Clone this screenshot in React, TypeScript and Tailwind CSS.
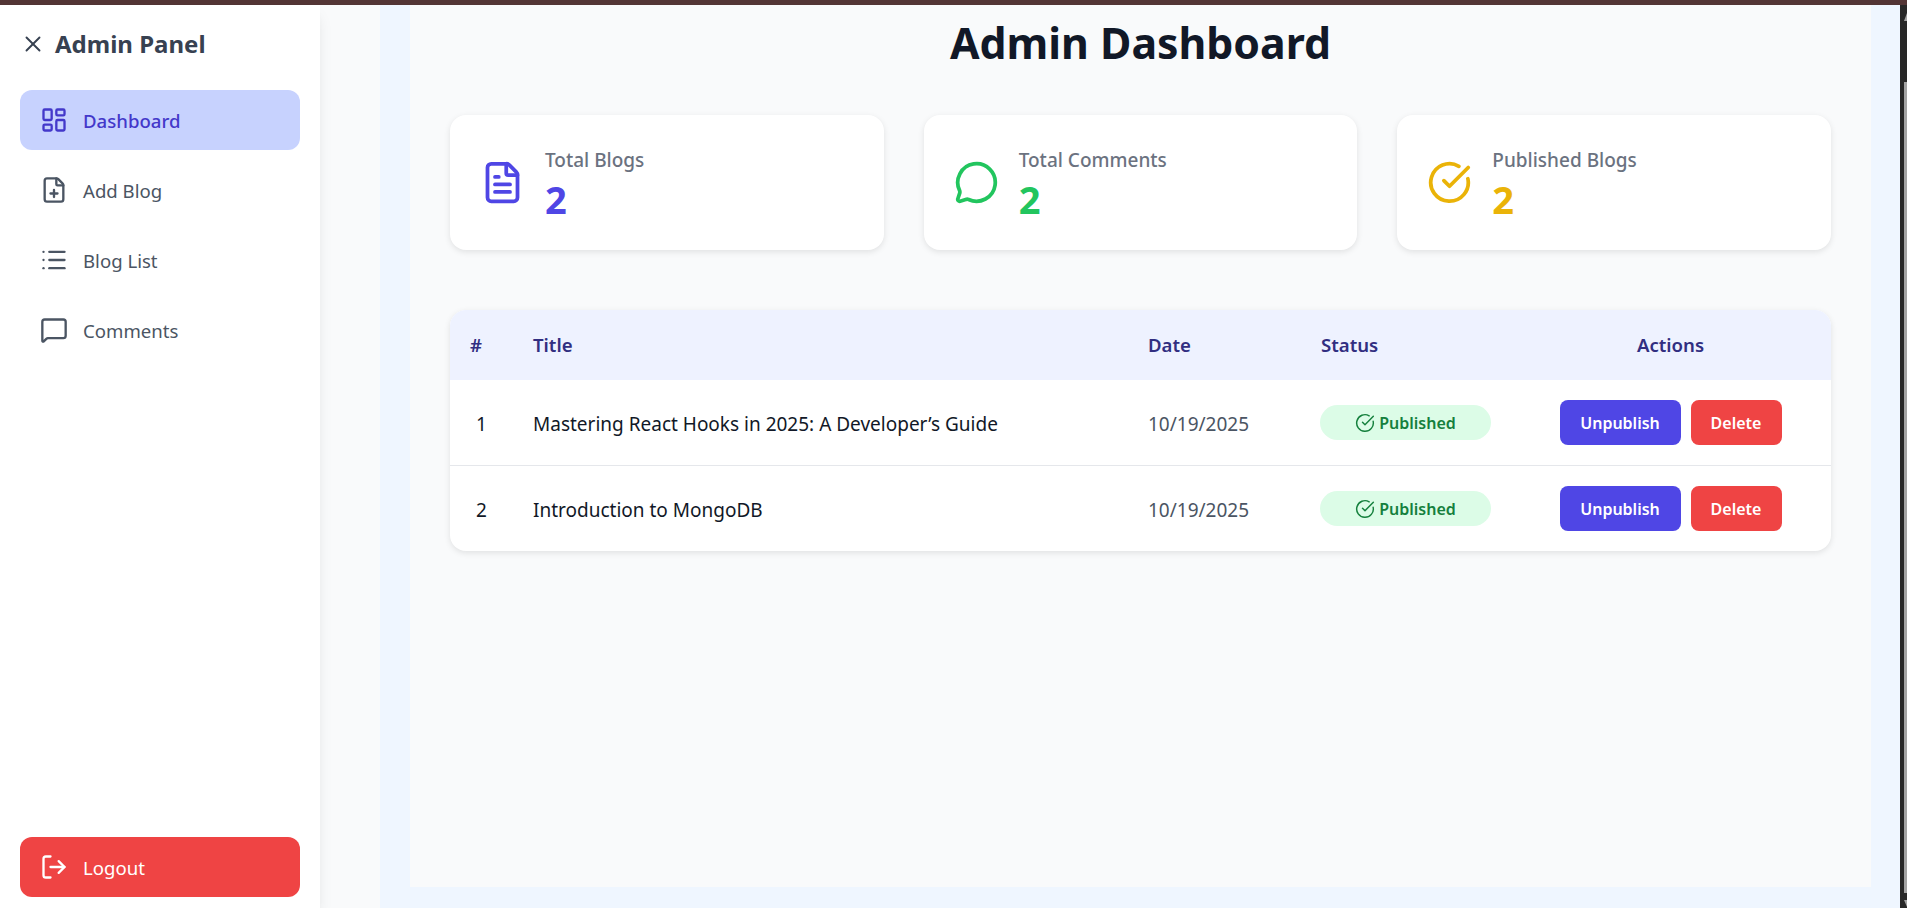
import React from 'react';
import {
  X,
  LayoutDashboard,
  FilePlus,
  List,
  MessageSquare,
  LogOut,
  FileText,
  MessageCircle,
  CircleCheckBig,
} from 'lucide-react';

const navItems = [
  { label: 'Dashboard', icon: LayoutDashboard, active: true },
  { label: 'Add Blog', icon: FilePlus, active: false },
  { label: 'Blog List', icon: List, active: false },
  { label: 'Comments', icon: MessageSquare, active: false },
];

const stats = [
  { label: 'Total Blogs', icon: FileText, iconClass: 'text-[#4f46e5]' },
  { label: 'Total Comments', icon: MessageCircle, iconClass: 'text-[#22c55e]' },
  { label: 'Published Blogs', icon: CircleCheckBig, iconClass: 'text-[#eab308]' },
];

const blogs = [
  { id: 1, title: 'Mastering React Hooks in 2025: A Developer’s Guide', date: '10/19/2025' },
  { id: 2, title: 'Introduction to MongoDB', date: '10/19/2025' },
];

const App: React.FC = () => {
  return (
    <div className="flex h-screen flex-col overflow-hidden bg-[#272727] font-['Noto_Sans',sans-serif]">
      <div className="h-[5px] shrink-0 bg-[#533535]" />
      <div className="flex min-h-0 flex-1">
        <div className="flex min-w-0 flex-1">
          <aside className="z-10 flex w-[320px] shrink-0 flex-col bg-white px-5 pb-[11px] shadow-lg">
            <div className="mb-[7px] flex h-[78px] shrink-0 items-center gap-[9px]">
              <X className="h-[26px] w-[26px] text-[#374151]" strokeWidth={1.75} />
              <h2 className="text-[24px] leading-none font-bold text-[#374151]">Admin Panel</h2>
            </div>
            <nav className="flex flex-col gap-[10px]">
              {navItems.map((item) => (
                <a
                  key={item.label}
                  className={`flex h-[60px] items-center gap-[15px] rounded-xl px-5 text-[18.6px] ${
                    item.active ? 'bg-[#c7d2fe] font-medium text-[#4338ca]' : 'text-[#4b5563]'
                  }`}
                >
                  <item.icon className="h-7 w-7" strokeWidth={2} />
                  <span className="pt-px">{item.label}</span>
                </a>
              ))}
            </nav>
            <button className="mt-auto flex h-[60px] items-center gap-[15px] rounded-xl bg-[#ef4444] px-5 text-[18.6px] text-white">
              <LogOut className="h-7 w-7" />
              <span className="pt-px">Logout</span>
            </button>
          </aside>

          <main className="min-w-0 flex-1 bg-[#f9fafb] pl-[60px]">
            <div className="h-full bg-[#eff6ff] pr-[29px] pb-[21px] pl-[30px]">
              <div className="h-full bg-[#f9fafb] px-10">
                <h1 className="pt-[7px] text-center text-[42.8px] leading-[62px] font-bold text-[#111827]">
                  Admin Dashboard
                </h1>
                <div className="mt-[41px] grid grid-cols-3 gap-10">
                  {stats.map((stat) => (
                    <div
                      key={stat.label}
                      className="flex h-[135px] items-center gap-5 rounded-2xl bg-white px-[30px] shadow-[0_2px_6px_rgba(0,0,0,0.1)]"
                    >
                      <stat.icon className={`h-[45px] w-[45px] ${stat.iconClass}`} />
                      <div>
                        <p className="pt-px text-[19px] leading-[31px] font-medium text-[#6b7280]">{stat.label}</p>
                        <p className={`text-[38px] leading-[46px] font-bold ${stat.iconClass}`}>2</p>
                      </div>
                    </div>
                  ))}
                </div>

                <div className="mt-[60px] overflow-hidden rounded-2xl bg-white shadow-[0_2px_6px_rgba(0,0,0,0.1)]">
                  <table className="w-full table-fixed border-separate border-spacing-0 text-left text-[19px]">
                    <thead className="bg-[#eef2ff] text-[18.6px] text-[#312e81]">
                      <tr className="h-[70px]">
                        <th className="w-[63px] px-5 font-semibold">#</th>
                        <th className="w-[615px] px-5 font-semibold">Title</th>
                        <th className="w-[173px] px-5 font-semibold">Date</th>
                        <th className="w-[209px] px-5 font-semibold">Status</th>
                        <th className="px-5 text-center font-semibold">Actions</th>
                      </tr>
                    </thead>
                    <tbody>
                      {blogs.map((blog, i) => {
                        const cell = i === 0 ? 'border-b border-[#e5e7eb]' : '';
                        return (
                          <tr key={blog.id} className={i === 0 ? 'h-[86px]' : 'h-[85px]'}>
                            <td className={`pt-[3px] text-center text-[#111827] ${cell}`}>{blog.id}</td>
                            <td className={`px-5 pt-[3px] text-[#111827] ${cell}`}>{blog.title}</td>
                            <td className={`px-5 pt-[3px] text-[#4b5563] ${cell}`}>{blog.date}</td>
                            <td className={`px-5 ${cell}`}>
                              <span className="-ml-px flex h-[35px] w-[171px] items-center justify-center gap-[4px] rounded-full bg-[#dcfce7] text-[16px] font-semibold text-[#15803d]">
                                <CircleCheckBig className="h-5 w-5" strokeWidth={1.75} />
                                Published
                              </span>
                            </td>
                            <td className={`px-5 ${cell}`}>
                              <div className="flex justify-center gap-[10px]">
                                <button className="h-[45px] w-[121px] rounded-lg bg-[#4f46e5] pt-px text-[16px] font-semibold text-white">
                                  Unpublish
                                </button>
                                <button className="h-[45px] w-[91px] rounded-lg bg-[#ef4444] pt-px text-[16px] font-semibold text-white">
                                  Delete
                                </button>
                              </div>
                            </td>
                          </tr>
                        );
                      })}
                    </tbody>
                  </table>
                </div>
              </div>
            </div>
          </main>
        </div>

        {/* browser scrollbar */}
        <div className="flex w-[7px] shrink-0 flex-col bg-[#272727] pt-2 pb-px pl-1">
          <svg viewBox="0 0 3 8" className="h-2 w-[3px] fill-[#a3a3a3]">
            <path d="M3 0v8H0z" />
          </svg>
          <div className="mt-[61px] flex-1 bg-[#a3a3a3]" />
          <svg viewBox="0 0 3 7" className="mt-[7px] h-[7px] w-[3px] fill-[#a3a3a3]">
            <path d="M0 0h3v7z" />
          </svg>
        </div>
      </div>
    </div>
  );
};

export default App;
